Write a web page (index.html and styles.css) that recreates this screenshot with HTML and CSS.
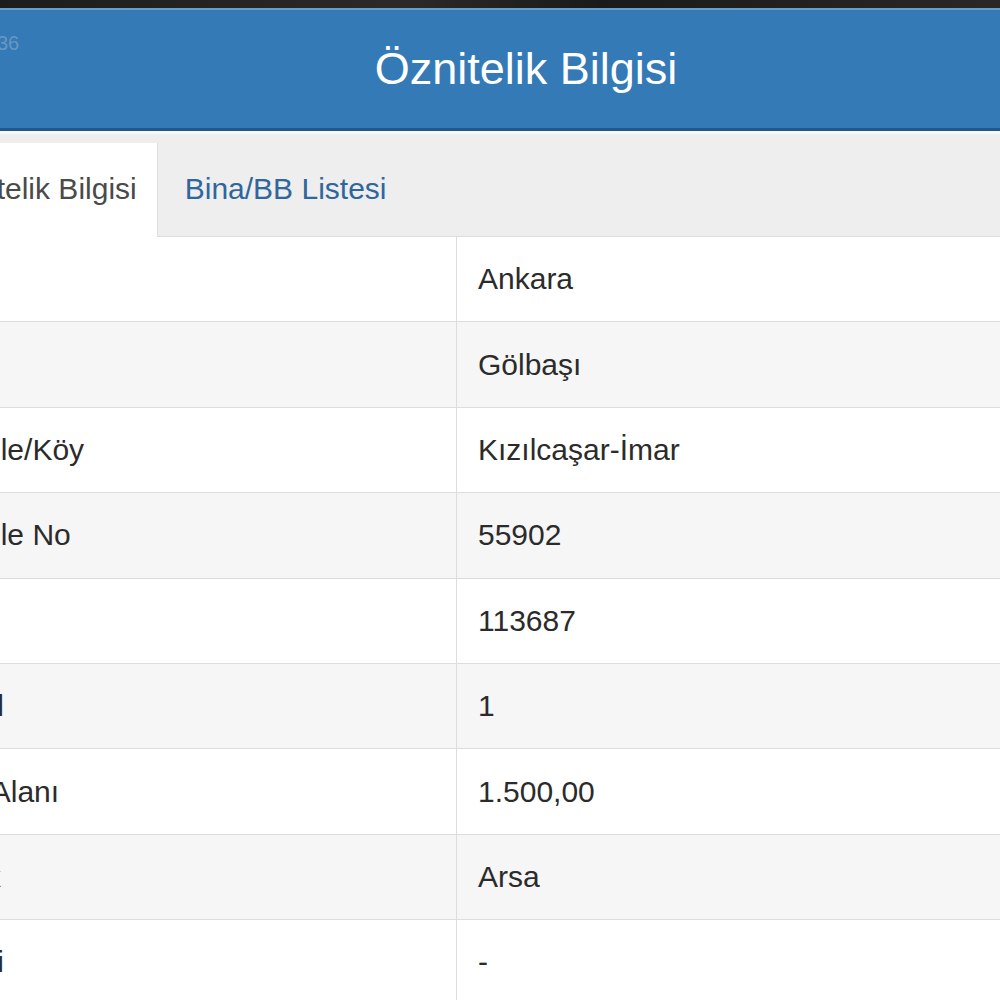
FILE: index.html
```html
<!DOCTYPE html>
<html lang="tr">
<head>
  <meta charset="UTF-8" />
  <title>Öznitelik Bilgisi</title>
  <link rel="stylesheet" href="styles.css">
</head>
<body>
  <div class="topbar"></div>

  <div class="modal">
    <div class="modal-header">
      <span class="ghost">36</span>
      <h4>Öznitelik Bilgisi</h4>
    </div>

    <div class="tabs">
      <a class="tab active">Öznitelik Bilgisi</a>
      <a class="tab">Bina/BB Listesi</a>
    </div>

    <div class="attr">
      <div class="row"><div class="key">İl</div><div class="val">Ankara</div></div>
      <div class="row"><div class="key">İlçe</div><div class="val">Gölbaşı</div></div>
      <div class="row"><div class="key">Mahalle/Köy</div><div class="val">Kızılcaşar-İmar</div></div>
      <div class="row"><div class="key">Mahalle No</div><div class="val">55902</div></div>
      <div class="row"><div class="key">Ada</div><div class="val">113687</div></div>
      <div class="row"><div class="key">Parsel</div><div class="val">1</div></div>
      <div class="row"><div class="key">Tapu Alanı</div><div class="val">1.500,00</div></div>
      <div class="row"><div class="key">Nitelik</div><div class="val">Arsa</div></div>
      <div class="row"><div class="key">Mevkii</div><div class="val">-</div></div>
    </div>
  </div>
</body>
</html>
```

FILE: styles.css
```css
* { margin: 0; padding: 0; box-sizing: border-box; }

html, body {
  height: 100%;
  overflow: hidden;
  background: #fff;
  font-family: 'Liberation Sans', Arial, sans-serif;
  color: #2b2b2b;
}

.topbar {
  height: 8px;
  background: linear-gradient(90deg, #1c1c1c, #2b2a28 40%, #1a1a1a 60%, #2a2826);
}

/* pencere sola taşıyor, ekran görüntüsü kırpılmış */
.modal {
  margin-left: -100px;
  width: 1252px;
}

.modal-header {
  position: relative;
  height: 123px;
  background: #347ab6;
  border-top: 2px solid #6a9ccb;
  border-bottom: 3px solid #21578a;
  display: flex;
  align-items: center;
  justify-content: center;
}

.modal-header h4 {
  font-size: 45px;
  font-weight: normal;
  color: #fff;
  line-height: 1;
  padding-bottom: 2px;
}

.ghost {
  position: absolute;
  left: 97px;
  top: 22px;
  font-size: 20px;
  color: rgba(200, 210, 220, 0.35);
}

.tabs {
  display: flex;
  align-items: flex-end;
  height: 106px;
  background: #eee;
  border-top: 3px solid #f6f7f7;
  border-bottom: 1px solid #ddd;
  padding-top: 9px;
}

.tab {
  display: flex;
  align-items: center;
  height: 94px;
  margin-bottom: -1px;
  padding: 0 21px 3px;
  font-size: 30px;
  color: #2f679c;
}

.tab.active {
  margin-left: 14px;
  padding-right: 20px;
  background: #fff;
  border-right: 1px solid #ddd;
  color: #4a4a4a;
}

.tab + .tab {
  margin-left: 6px;
}

.attr .row {
  display: grid;
  grid-template-columns: 557px 1fr;
  height: 85.4px;
  border-bottom: 1px solid #ddd;
  font-size: 30px;
}

.attr .row:nth-child(even) {
  background: #f6f6f6;
}

.key, .val {
  display: flex;
  align-items: center;
}

.key {
  padding-left: 19px;
  border-right: 1px solid #ddd;
}

.val {
  padding-left: 21px;
}
```
